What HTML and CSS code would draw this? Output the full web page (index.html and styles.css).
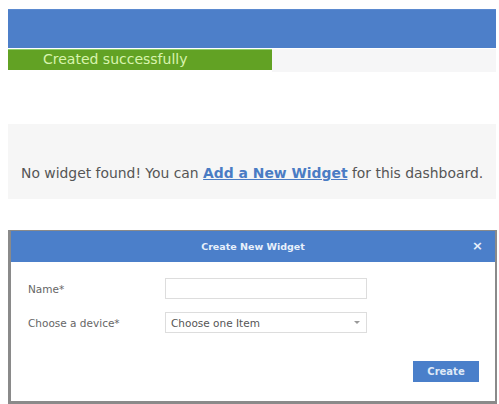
FILE: index.html
```html
<!DOCTYPE html>
<html>
<head>
<meta charset="utf-8">
<link rel="stylesheet" href="styles.css">
</head>
<body>
<div class="page">
  <div class="topbar"></div>
  <div class="alert-row">
    <div class="alert">Created successfully</div>
    <div class="alert-rest"></div>
  </div>
  <div class="empty-panel">
    No widget found! You can <a class="link" href="#">Add a New Widget</a> for this dashboard.
  </div>
  <div class="dialog">
    <div class="dialog-head">
      <span class="dialog-title">Create New Widget</span>
      <span class="dialog-close">×</span>
    </div>
    <div class="dialog-body">
      <div class="form-row">
        <label class="form-label">Name*</label>
        <div class="field"></div>
      </div>
      <div class="form-row">
        <label class="form-label">Choose a device*</label>
        <div class="field select">
          <span>Choose one Item</span>
          <span class="caret"></span>
        </div>
      </div>
      <div class="actions">
        <button class="btn">Create</button>
      </div>
    </div>
  </div>
</div>
</body>
</html>
```
FILE: styles.css
```css
html, body {
  margin: 0;
  padding: 0;
  background: #ffffff;
}
.page {
  padding: 9px 3px 0 8px;
  height: 404px;
  box-sizing: border-box;
  font-family: "DejaVu Sans", Verdana, sans-serif;
  overflow: hidden;
}
.topbar {
  height: 39px;
  background: #4d7fc9;
  border-top: 1px solid #5b8ad0;
  box-sizing: border-box;
}
.alert-row {
  display: flex;
  margin-top: 1px;
  height: 23px;
}
.alert {
  width: 264px;
  height: 21px;
  background: #62a224;
  border-top: 1px solid #8fd06a;
  box-sizing: border-box;
  color: #d8f4ae;
  font-family: "DejaVu Sans", Verdana, sans-serif;
  font-size: 14px;
  line-height: 19px;
  padding-left: 35px;
  white-space: nowrap;
}
.alert-rest {
  flex: 1;
  background: #f6f6f7;
}
.empty-panel {
  margin-top: 52px;
  height: 75px;
  background: #f6f6f6;
  box-sizing: border-box;
  padding: 41px 0 0 13px;
  color: #555555;
  font-size: 13.9px;
  line-height: 16px;
  white-space: nowrap;
}
.link {
  color: #4a7cc4;
  font-weight: bold;
  text-decoration: underline;
}
.dialog {
  margin-top: 31px;
  width: 489px;
  height: 174px;
  border: 3px solid #8a8a8a;
  border-top-width: 1px;
  border-right-width: 2px;
  box-sizing: border-box;
  background: #ffffff;
  display: flex;
  flex-direction: column;
}
.dialog-head {
  height: 31px;
  background: #4b7fca;
  display: flex;
  align-items: center;
  justify-content: center;
  position: relative;
  color: #e8f0fb;
}
.dialog-title {
  font-size: 9.5px;
  font-weight: bold;
}
.dialog-close {
  position: absolute;
  right: 12px;
  top: 8px;
  font-size: 13px;
  font-weight: bold;
  line-height: 14px;
}
.dialog-body {
  flex: 1;
  display: flex;
  flex-direction: column;
  padding: 16px 0 0 17px;
}
.form-row {
  display: flex;
  align-items: center;
  height: 21px;
  margin-bottom: 13px;
}
.form-label {
  width: 137px;
  font-size: 10.5px;
  color: #666666;
}
.field {
  width: 202px;
  height: 21px;
  border: 1px solid #dddddd;
  box-sizing: border-box;
  background: #ffffff;
}
.select {
  display: flex;
  align-items: center;
  justify-content: space-between;
  padding: 0 6px 0 5px;
  font-size: 10.5px;
  color: #555555;
}
.caret {
  width: 0;
  height: 0;
  border-left: 3px solid transparent;
  border-right: 3px solid transparent;
  border-top: 3px solid #999999;
}
.actions {
  display: flex;
  justify-content: flex-end;
  padding-right: 16px;
  margin-top: 15px;
}
.btn {
  width: 66px;
  height: 21px;
  background: #4a7fca;
  border: none;
  color: #dfe9f7;
  font-family: "DejaVu Sans", Verdana, sans-serif;
  font-size: 10px;
  font-weight: bold;
  padding: 0;
}
```
